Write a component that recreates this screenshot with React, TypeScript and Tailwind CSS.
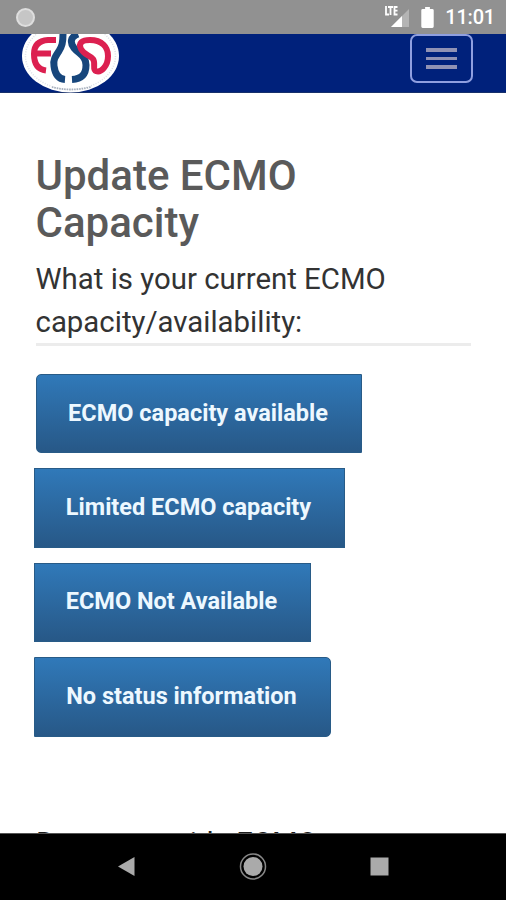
const buttons = [
  { label: 'ECMO capacity available', cls: 'ml-[36px] w-[326px] rounded-l-[5px]' },
  { label: 'Limited ECMO capacity', cls: 'ml-[34px] w-[311px]' },
  { label: 'ECMO Not Available', cls: 'ml-[34px] w-[277px]' },
  { label: 'No status information', cls: 'ml-[34px] w-[297px] rounded-r-[5px]' },
];

function StatusBar() {
  return (
    <div className="flex h-[34px] shrink-0 items-center bg-[#919191] pl-[16px] pr-[11px]">
      <div className="h-[19px] w-[19px] rounded-full border-2 border-[#dedede] bg-[#c6c6c6]" />
      <svg className="ml-auto" width="28" height="24" viewBox="0 0 28 24">
        <path d="M9 22 27 4v18z" fill="#b4b4b4" />
        <path d="M9 22 20 11v11z" fill="#fff" />
        <path d="M4 1v8.500h3M6 2h5M8.500 2v8M15.500 2h-3v7.500h3M12.500 5.700h3" stroke="#fff" strokeWidth="1.800" fill="none" />
      </svg>
      <svg className="ml-[11px]" width="13" height="21" viewBox="0 0 13 22">
        <path d="M4 0h5v2h2.500q1.500 0 1.500 1.500v17q0 1.500-1.500 1.500h-10Q0 22 0 20.500v-17Q0 2 1.500 2H4z" fill="#fff" />
      </svg>
      <span className="ml-[11px] text-[20px] leading-none font-medium tracking-[-0.2px] text-white">11:01</span>
    </div>
  );
}

function Logo() {
  return (
    <svg className="ml-[21px] self-start" width="99" height="59" viewBox="0 0 99 59">
      <ellipse cx="49.500" cy="22" rx="48.500" ry="36.500" fill="#fff" />
      <ellipse cx="49.500" cy="22" rx="45" ry="33.500" fill="none" stroke="#8c99ad" strokeWidth="1.500" strokeDasharray="1 1.500" opacity=".3" />
      <g fill="none" strokeWidth="6">
        <path d="M35 6H27Q13 7 13 20q0 15 12 16.500M13 19.500h17" stroke="#dc2050" />
        <path d="M42 0c0 9-1 12-4 17-4 6-6 9-5 15 1 8 4 13 11 13.500" stroke="#17467c" strokeWidth="7" />
        <path d="M57 0c-8 3-8 9-4 14 5 6 12 8 12 17 0 10-5 14-14 14.500" stroke="#17467c" strokeWidth="7" />
        <path d="M60 15C57 9 61 6 69 6c12 0 18 7 18 16 0 10-7 17-12 15-4-1 0-8-3-12-3-4-9-4-12-10z" stroke="#dc2050" />
      </g>
      <path d="M31 53q18 5 39 0" fill="none" stroke="#68778d" strokeWidth="1.800" strokeDasharray="1.500 1" opacity=".55" />
    </svg>
  );
}

export default function App() {
  return (
    <div className="flex h-[900px] w-[506px] flex-col overflow-hidden bg-white font-[Roboto,sans-serif]">
      <StatusBar />
      <header className="flex h-[59px] shrink-0 items-start border-b border-[#17306b] bg-[#00217b]">
        <Logo />
        <button aria-label="Menu" className="mr-[33px] ml-auto flex h-[49px] w-[63px] flex-col items-center justify-center gap-[5px] rounded-[7px] border-2 border-[#8f9fe0]">
          <i className="h-[3.500px] w-[31px] bg-[#9092b4]" />
          <i className="h-[3.500px] w-[31px] bg-[#9092b4]" />
          <i className="h-[3.500px] w-[31px] bg-[#9092b4]" />
        </button>
      </header>
      <main className="flex min-h-0 flex-1 flex-col overflow-hidden">
        <h1 className="mt-[60px] ml-[35.500px] text-[42px] leading-[46.500px] font-medium text-[#5a5a5a]">Update ECMO<br />Capacity</h1>
        <p className="mr-[35px] ml-[35.500px] mt-[12px] h-[88px] border-b-[3px] border-[#ececec] text-[29.400px] leading-[43px] text-[#333]">What is your current ECMO<br />capacity/availability:</p>
        <div className="mt-[28px] flex flex-col items-start gap-[15px]">
          {buttons.map((b) => (
            <button key={b.label} className={`h-[79.400px] border border-[#285b87] bg-linear-to-b from-[#3079b9] to-[#275887] pr-[2px] pb-[1px] text-[23.500px] font-bold whitespace-nowrap text-[#edf8ff] ${b.cls}`}>{b.label}</button>
          ))}
        </div>
        <p className="mt-[85px] ml-[36px] text-[29.300px] leading-[42px] whitespace-nowrap text-[#1c1c1c]">Do you provide ECMO</p>
      </main>
      <nav className="flex h-[67px] shrink-0 justify-center border-t border-[#555] bg-black">
        <svg width="506" height="66" viewBox="0 0 506 66">
          <path d="M118 32.500 134.500 23v19z" fill="#aaa" />
          <circle cx="253" cy="32.500" r="12.500" fill="none" stroke="#888" strokeWidth="1.500" />
          <circle cx="253" cy="32.500" r="9.500" fill="#aaa" />
          <rect x="370.500" y="23.500" width="18" height="18" fill="#aaa" />
        </svg>
      </nav>
    </div>
  );
}
